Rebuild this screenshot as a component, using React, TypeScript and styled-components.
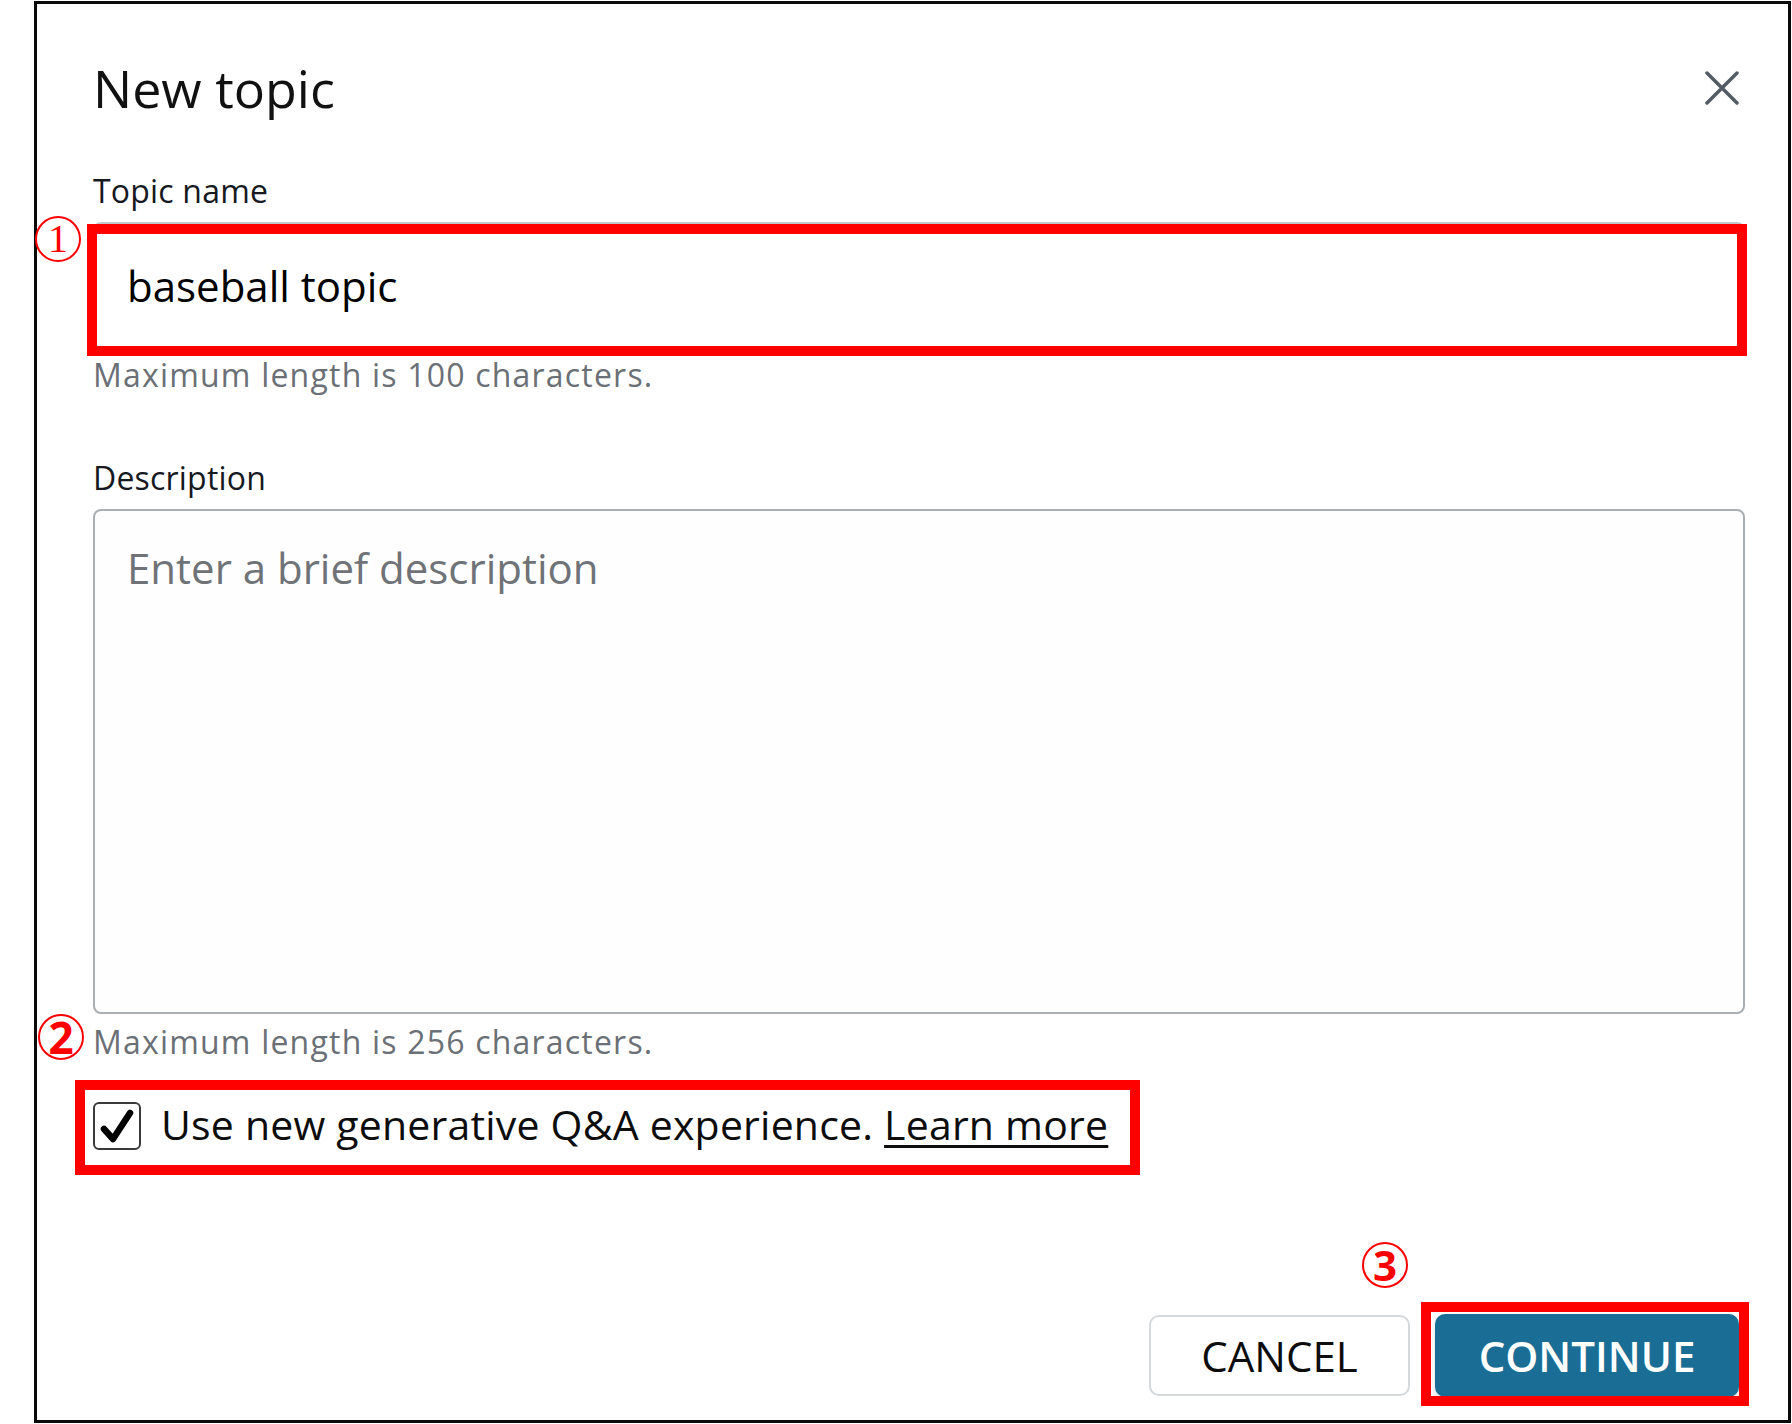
import React from 'react';
import styled, { createGlobalStyle } from 'styled-components';

const GlobalStyle = createGlobalStyle`
  html, body { margin: 0; padding: 0; background: #ffffff; }
  body { font-family: "Open Sans", "Noto Sans", sans-serif; color: #16191f; }
  *, *::before, *::after { box-sizing: border-box; }
`;

const Page = styled.div`
  padding: 1px 0 0 34px;
`;

const Dialog = styled.section`
  width: 1757px;
  height: 1422px;
  border: 3px solid #0a0a0a;
  background: #ffffff;
  padding: 58px 43px 0 56px;
  display: flex;
  flex-direction: column;
`;

const Header = styled.header`
  display: flex;
  justify-content: space-between;
  align-items: flex-start;
`;

const Title = styled.h1`
  margin: 0;
  font-size: 52px;
  line-height: 1;
  font-weight: 400;
  color: #111111;
`;

const CloseButton = styled.button`
  border: 0;
  background: none;
  padding: 0;
  margin: 9px 6px 0 0;
  width: 34px;
  height: 34px;
  display: flex;
  cursor: pointer;
`;

const FieldLabel = styled.label<{ $top: number }>`
  display: block;
  margin: ${(p) => p.$top}px 0 15px;
  font-size: 32px;
  line-height: 1;
  font-weight: 500;
  letter-spacing: 0.2px;
  color: #16191f;
`;

const Annotated = styled.div<{ $inline?: boolean }>`
  position: relative;
  display: ${(p) => (p.$inline ? 'inline-flex' : 'block')};
`;

const Highlight = styled.span<{ $top: number; $left: number; $width?: number; $right?: number; $bottom?: number; $height?: number }>`
  position: absolute;
  top: ${(p) => p.$top}px;
  left: ${(p) => p.$left}px;
  ${(p) => (p.$width !== undefined ? `width: ${p.$width}px;` : `right: ${p.$right}px;`)}
  ${(p) => (p.$height !== undefined ? `height: ${p.$height}px;` : `bottom: ${p.$bottom}px;`)}
  border: 10px solid #ff0000;
  pointer-events: none;
  z-index: 2;
`;

const Marker = styled.span<{ $top: number; $left: number; $serif?: boolean; $size: number }>`
  position: absolute;
  top: ${(p) => p.$top}px;
  left: ${(p) => p.$left}px;
  width: 46px;
  height: 46px;
  border: 2px solid #ff0000;
  border-radius: 50%;
  display: flex;
  align-items: center;
  justify-content: center;
  color: #ff0000;
  font-family: ${(p) => (p.$serif ? '"Liberation Serif", serif' : '"Open Sans", sans-serif')};
  font-weight: ${(p) => (p.$serif ? 400 : 700)};
  font-size: ${(p) => p.$size}px;
  line-height: 1;
  z-index: 3;
`;

const TextInput = styled.input`
  display: block;
  width: 100%;
  height: 127px;
  margin: 0;
  border: 2px solid #c2c7cb;
  border-radius: 8px;
  padding: 0 0 0 32px;
  font-family: inherit;
  font-size: 42px;
  color: #000000;
  background: #ffffff;
  outline: none;
`;

const Hint = styled.p<{ $top?: number }>`
  margin: ${(p) => p.$top ?? 10}px 0 0;
  font-size: 32px;
  line-height: 1;
  letter-spacing: 1.2px;
  color: #6b7076;
`;

const TextArea = styled.textarea`
  display: block;
  width: 100%;
  height: 505px;
  margin: 0;
  border: 2px solid #a9aeb2;
  border-radius: 8px;
  padding: 28px 32px;
  font-family: inherit;
  font-size: 42px;
  line-height: 57px;
  color: #000000;
  background: #fefefe;
  resize: none;
  outline: none;
  &::placeholder {
    color: #6f7377;
  }
`;

const CheckRow = styled.label`
  display: flex;
  align-items: flex-start;
  gap: 20px;
  height: 47px;
`;

const CheckBox = styled.span`
  flex: none;
  width: 48px;
  height: 48px;
  border: 2px solid #3a3a3a;
  border-radius: 6px;
  display: flex;
  align-items: center;
  justify-content: center;
  background: #ffffff;
`;

const CheckText = styled.span`
  margin-top: 2px;
  font-size: 41px;
  line-height: 1;
  letter-spacing: 0.2px;
  color: #0d0d0d;
  white-space: nowrap;
`;

const LearnMore = styled.a`
  color: #0d0d0d;
  text-decoration: underline;
  text-decoration-thickness: 3px;
  text-underline-offset: 5px;
`;

const Footer = styled.footer`
  margin-top: 165px;
  display: flex;
  justify-content: flex-end;
  align-items: center;
  gap: 25px;
  padding-right: 6px;
`;

const Button = styled.button<{ $primary?: boolean }>`
  width: ${(p) => (p.$primary ? 304 : 261)}px;
  height: ${(p) => (p.$primary ? 83 : 81)}px;
  border-radius: 10px;
  border: ${(p) => (p.$primary ? '0' : '2px solid #d5d9dc')};
  background: ${(p) => (p.$primary ? '#1a6e96' : '#ffffff')};
  color: ${(p) => (p.$primary ? '#ffffff' : '#0d0d0d')};
  font-family: inherit;
  font-size: 42px;
  font-weight: ${(p) => (p.$primary ? 600 : 400)};
  line-height: 1;
  padding: 0;
  cursor: pointer;
  box-shadow: ${(p) => (p.$primary ? '0 4px 8px rgba(0,0,0,0.12)' : 'none')};
`;

export default function App() {
  return (
    <>
      <GlobalStyle />
      <Page>
        <Dialog>
          <Header>
            <Title>New topic</Title>
            <CloseButton aria-label="Close">
              <svg width="34" height="34" viewBox="0 0 34 34">
                <path d="M2 2 L32 32 M32 2 L2 32" stroke="#545b64" strokeWidth="3.5" strokeLinecap="round" fill="none" />
              </svg>
            </CloseButton>
          </Header>

          <FieldLabel $top={61}>Topic name</FieldLabel>
          <Annotated>
            <TextInput readOnly value="baseball topic" />
            <Highlight $top={2} $left={-6} $right={-2} $bottom={-7} />
            <Marker $top={-6} $left={-58} $serif $size={40}>1</Marker>
          </Annotated>
          <Hint>Maximum length is 100 characters.</Hint>

          <FieldLabel $top={71}>Description</FieldLabel>
          <TextArea placeholder="Enter a brief description" />
          <Hint $top={12}>Maximum length is 256 characters.</Hint>

          <Annotated style={{ marginTop: 44 }}>
            <CheckRow>
              <CheckBox>
                <svg width="36" height="36" viewBox="0 0 36 36">
                  <path d="M5 21 L14 31 L31 5" stroke="#000" strokeWidth="6.5" strokeLinecap="round" strokeLinejoin="round" fill="none" />
                </svg>
              </CheckBox>
              <CheckText>
                Use new generative Q&amp;A experience. <LearnMore>Learn more</LearnMore>
              </CheckText>
            </CheckRow>
            <Highlight $top={-22} $left={-18} $width={1065} $height={95} />
            <Marker $top={-88} $left={-55} $size={44}>2</Marker>
          </Annotated>

          <Footer>
            <Button>CANCEL</Button>
            <Annotated $inline>
              <Button $primary>CONTINUE</Button>
              <Highlight $top={-12} $left={-14} $right={-10} $bottom={-9} />
              <Marker $top={-72} $left={-73} $size={42}>3</Marker>
            </Annotated>
          </Footer>
        </Dialog>
      </Page>
    </>
  );
}
